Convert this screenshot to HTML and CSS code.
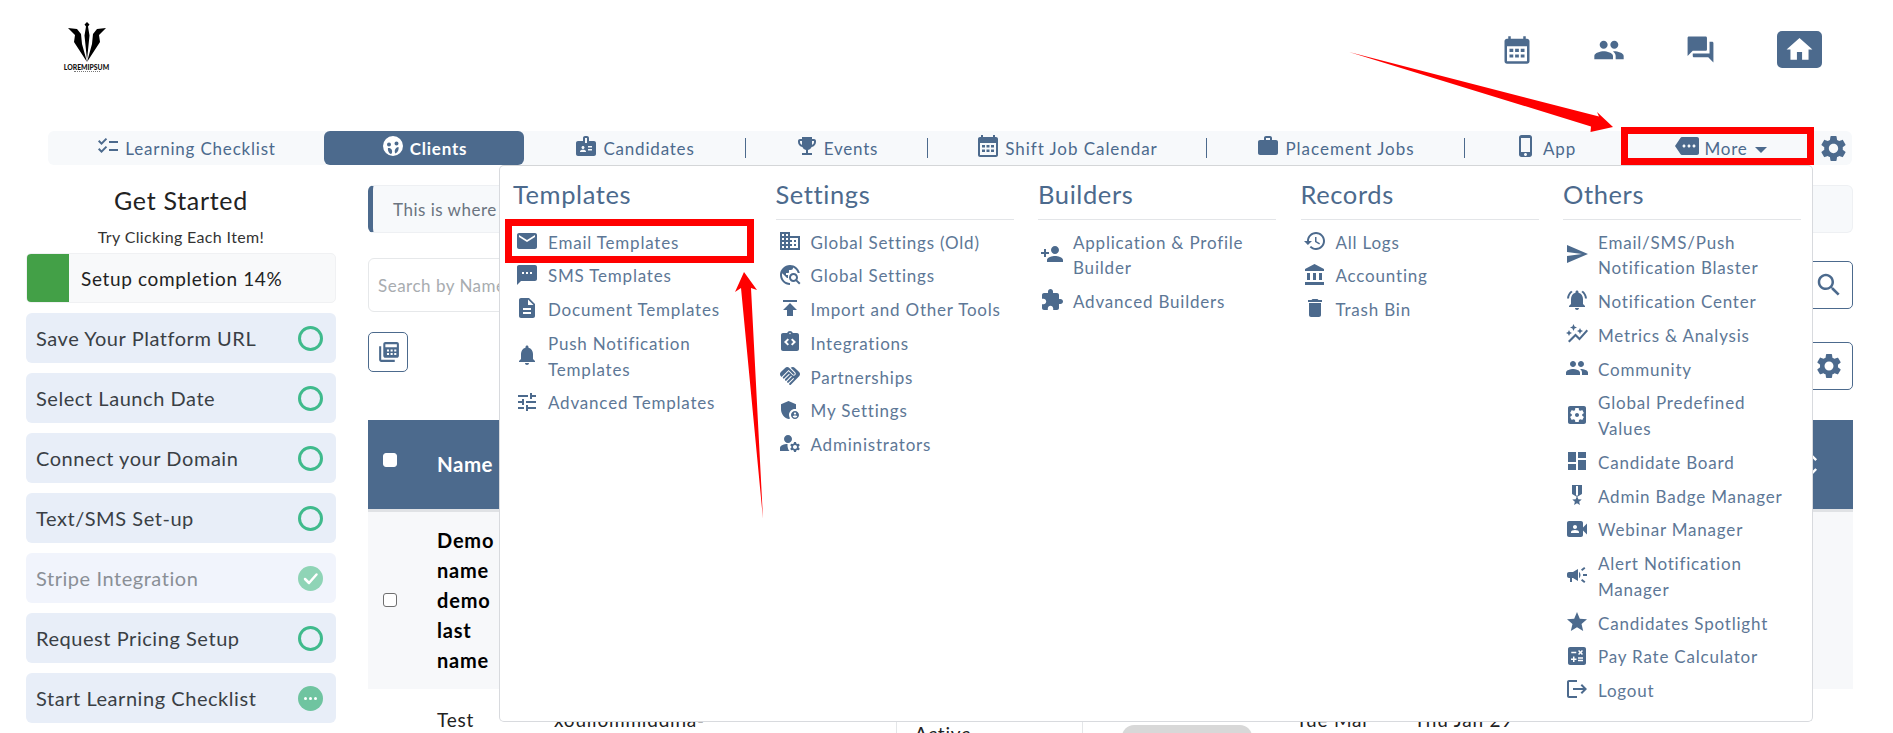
FILE: index.html
```html
<!DOCTYPE html>
<html lang="en">
<head>
<meta charset="utf-8">
<title>Clients</title>
<link rel="stylesheet" href="styles.css">
</head>
<body>
<svg class="defs" width="0" height="0" aria-hidden="true">
<symbol id="i-email" viewBox="0 0 24 24"><path d="M20 4H4c-1.1 0-1.99.9-1.99 2L2 18c0 1.1.9 2 2 2h16c1.1 0 2-.9 2-2V6c0-1.1-.9-2-2-2zm0 4l-8 5-8-5V6l8 5 8-5v2z"/></symbol>
<symbol id="i-sms" viewBox="0 0 24 24"><path d="M20 2H4c-1.1 0-1.99.9-1.99 2L2 22l4-4h14c1.1 0 2-.9 2-2V4c0-1.1-.9-2-2-2zM9 11H7V9h2v2zm4 0h-2V9h2v2zm4 0h-2V9h2v2z"/></symbol>
<symbol id="i-doc" viewBox="0 0 24 24"><path d="M14 2H6c-1.1 0-1.99.9-1.99 2L4 20c0 1.1.89 2 1.99 2H18c1.1 0 2-.9 2-2V8l-6-6zm2 16H8v-2h8v2zm0-4H8v-2h8v2zm-3-5V3.5L18.5 9H13z"/></symbol>
<symbol id="i-bell" viewBox="0 0 24 24"><path d="M12 22c1.1 0 2-.9 2-2h-4c0 1.1.89 2 2 2zm6-6v-5c0-3.07-1.64-5.64-4.5-6.32V4c0-.83-.67-1.5-1.5-1.5s-1.5.67-1.5 1.5v.68C7.63 5.36 6 7.92 6 11v5l-2 2v1h16v-1l-2-2z"/></symbol>
<symbol id="i-tune" viewBox="0 0 24 24"><path d="M3 17v2h6v-2H3zM3 5v2h10V5H3zm10 16v-2h8v-2h-8v-2h-2v6h2zM7 9v2H3v2h4v2h2V9H7zm14 4v-2H11v2h10zm-6-4h2V7h4V5h-4V3h-2v6z"/></symbol>
<symbol id="i-domain" viewBox="0 0 24 24"><path d="M12 7V3H2v18h20V7H12zM6 19H4v-2h2v2zm0-4H4v-2h2v2zm0-4H4V9h2v2zm0-4H4V5h2v2zm4 12H8v-2h2v2zm0-4H8v-2h2v2zm0-4H8V9h2v2zm0-4H8V5h2v2zm10 12h-8v-2h2v-2h-2v-2h2v-2h-2V9h8v10zm-2-8h-2v2h2v-2zm0 4h-2v2h2v-2z"/></symbol>
<symbol id="i-travel" viewBox="0 0 24 24"><path d="M19.3 16.9c.4-.7.7-1.5.7-2.4 0-2.5-2-4.5-4.5-4.5S11 12 11 14.5s2 4.5 4.5 4.5c.9 0 1.7-.3 2.4-.7l3.2 3.2 1.4-1.4-3.2-3.2zm-3.8.1c-1.4 0-2.5-1.1-2.5-2.5s1.1-2.5 2.5-2.5 2.5 1.1 2.5 2.5-1.1 2.5-2.5 2.5zM12 20v2C6.48 22 2 17.52 2 12S6.48 2 12 2c4.84 0 8.87 3.44 9.8 8h-2.07c-.64-2.46-2.4-4.47-4.73-5.41V5c0 1.1-.9 2-2 2h-2v2c0 .55-.45 1-1 1H8v2h2v3H9l-4.79-4.79C4.08 10.79 4 11.38 4 12c0 4.41 3.59 8 8 8z"/></symbol>
<symbol id="i-publish" viewBox="0 0 24 24"><path d="M5 4v2h14V4H5zm0 10h4v6h6v-6h4l-7-7-7 7z"/></symbol>
<symbol id="i-integ" viewBox="0 0 24 24"><path d="M19 3h-4.18C14.4 1.84 13.3 1 12 1s-2.4.84-2.82 2H5c-1.1 0-2 .9-2 2v14c0 1.1.9 2 2 2h14c1.1 0 2-.9 2-2V5c0-1.1-.9-2-2-2zM11 14.17l-1.41 1.42L6 12l3.59-3.59L11 9.83 8.83 12 11 14.17zm1-9.92c-.41 0-.75-.34-.75-.75s.34-.75.75-.75.75.34.75.75-.34.75-.75.75zm2.41 11.34L13 14.17 15.17 12 13 9.83l1.41-1.42L18 12l-3.59 3.59z"/></symbol>
<symbol id="i-hand" viewBox="0 0 24 24"><path d="M16.48 10.41c-.39.39-1.04.39-1.43 0l-4.47-4.46-7.05 7.04-.66-.63c-1.17-1.17-1.17-3.07 0-4.24l4.24-4.24c1.17-1.17 3.07-1.17 4.24 0L16.48 9c.39.39.39 1.02 0 1.41zm.7-2.12c.78.78.78 2.05 0 2.83-1.27 1.27-2.61.22-2.83 0l-3.76-3.76-5.57 5.57c-.39.39-.39 1.02 0 1.41.39.39 1.02.39 1.42 0l4.62-4.62.71.71-4.62 4.62c-.39.39-.39 1.02 0 1.41.39.39 1.02.39 1.42 0l4.62-4.62.71.71-4.62 4.62c-.39.39-.39 1.02 0 1.41.39.39 1.02.39 1.41 0l4.62-4.62.71.71-4.62 4.62c-.39.39-.39 1.02 0 1.41.39.39 1.02.39 1.41 0l8.32-8.34c1.17-1.17 1.17-3.07 0-4.24l-4.24-4.24c-1.15-1.15-3.01-1.17-4.18-.06l4.47 4.47z"/></symbol>
<symbol id="i-shield" viewBox="0 0 24 24"><path d="M17 11c.34 0 .67.04 1 .09V6.27L10.5 3 3 6.27v4.91c0 4.54 3.2 8.79 7.5 9.82.55-.13 1.08-.32 1.6-.55-.69-.98-1.1-2.17-1.1-3.45 0-3.31 2.69-6 6-6z"/><path d="M17 13c-2.21 0-4 1.79-4 4s1.79 4 4 4 4-1.79 4-4-1.79-4-4-4zm0 1.38c.62 0 1.12.51 1.12 1.12s-.51 1.12-1.12 1.12-1.12-.51-1.12-1.12.5-1.12 1.12-1.12zm0 5.37c-.93 0-1.74-.46-2.24-1.17.05-.72 1.51-1.08 2.24-1.08s2.19.36 2.24 1.08c-.5.71-1.31 1.17-2.24 1.17z"/></symbol>
<symbol id="i-manage" viewBox="0 0 24 24"><path d="M10 12c2.21 0 4-1.79 4-4s-1.79-4-4-4-4 1.79-4 4 1.79 4 4 4zm-.45 1.01C6.85 12.9 2 14.2 2 17v3h9.5c-2.47-2.76-1.97-6.99-1.95-6.99zM20.75 16c0-.22-.03-.42-.06-.63l1.14-1.01-1-1.73-1.45.49c-.32-.27-.68-.48-1.08-.63L18 11h-2l-.3 1.49c-.4.15-.76.36-1.08.63l-1.45-.49-1 1.73 1.14 1.01c-.03.21-.06.41-.06.63s.03.42.06.63l-1.14 1.01 1 1.73 1.45-.49c.32.27.68.48 1.08.63L16 21h2l.3-1.49c.4-.15.76-.36 1.08-.63l1.45.49 1-1.73-1.14-1.01c.03-.21.06-.41.06-.63zM17 18c-1.1 0-2-.9-2-2s.9-2 2-2 2 .9 2 2-.9 2-2 2z"/></symbol>
<symbol id="i-personadd" viewBox="0 0 24 24"><path d="M15 12c2.21 0 4-1.79 4-4s-1.79-4-4-4-4 1.79-4 4 1.79 4 4 4zm-9-2V7H4v3H1v2h3v3h2v-3h3v-2H6zm9 4c-2.67 0-8 1.34-8 4v2h16v-2c0-2.66-5.33-4-8-4z"/></symbol>
<symbol id="i-ext" viewBox="0 0 24 24"><path d="M20.5 11H19V7c0-1.1-.9-2-2-2h-4V3.5C13 2.12 11.88 1 10.5 1S8 2.12 8 3.5V5H4c-1.1 0-1.99.9-1.99 2v3.8H3.5c1.49 0 2.7 1.21 2.7 2.7s-1.21 2.7-2.7 2.7H2V20c0 1.1.9 2 2 2h3.8v-1.5c0-1.49 1.21-2.7 2.7-2.7 1.49 0 2.7 1.21 2.7 2.7V22H17c1.1 0 2-.9 2-2v-4h1.5c1.38 0 2.5-1.12 2.5-2.5S21.88 11 20.5 11z"/></symbol>
<symbol id="i-history" viewBox="0 0 24 24"><path d="M13 3c-4.97 0-9 4.03-9 9H1l3.89 3.89.07.14L9 12H6c0-3.87 3.13-7 7-7s7 3.13 7 7-3.13 7-7 7c-1.93 0-3.68-.79-4.94-2.06l-1.42 1.42C8.27 19.99 10.51 21 13 21c4.97 0 9-4.03 9-9s-4.03-9-9-9zm-1 5v5l4.28 2.54.72-1.21-3.5-2.08V8H12z"/></symbol>
<symbol id="i-bank" viewBox="0 0 24 24"><path d="M4 10v7h3v-7H4zm6 0v7h3v-7h-3zM2 22h19v-3H2v3zm14-12v7h3v-7h-3zm-4.5-9L2 6v2h19V6l-9.5-5z"/></symbol>
<symbol id="i-trash" viewBox="0 0 24 24"><path d="M6 19c0 1.1.9 2 2 2h8c1.1 0 2-.9 2-2V7H6v12zM19 4h-3.5l-1-1h-5l-1 1H5v2h14V4z"/></symbol>
<symbol id="i-send" viewBox="0 0 24 24"><path d="M2.01 21L23 12 2.01 3 2 10l15 2-15 2z"/></symbol>
<symbol id="i-bellactive" viewBox="0 0 24 24"><path d="M7.58 4.08L6.15 2.65C3.75 4.48 2.17 7.3 2.03 10.5h2c.15-2.65 1.51-4.97 3.55-6.42zm12.39 6.42h2c-.15-3.2-1.73-6.02-4.12-7.85l-1.42 1.43c2.02 1.45 3.39 3.77 3.54 6.42zM18 11c0-3.07-1.64-5.64-4.5-6.32V4c0-.83-.67-1.5-1.5-1.5s-1.5.67-1.5 1.5v.68C7.63 5.36 6 7.92 6 11v5l-2 2v1h16v-1l-2-2v-5zm-6 11c.14 0 .27-.01.4-.04.65-.14 1.18-.58 1.44-1.18.1-.24.15-.5.15-.78h-4c.01 1.1.9 2 2.01 2z"/></symbol>
<symbol id="i-graph" viewBox="0 0 24 24"><path d="M14.06 9.94L12 9l2.06-.94L15 6l.94 2.06L18 9l-2.06.94L15 12l-.94-2.06zM4 14l.94-2.06L7 11l-2.06-.94L4 8l-.94 2.06L1 11l2.06.94L4 14zm4.5-5l1.09-2.41L12 5.5 9.59 4.41 8.5 2 7.41 4.41 5 5.5l2.41 1.09L8.5 9zm-4 11.5l6-6.01 4 4L23 8.93l-1.41-1.41-7.09 7.97-4-4L3 19l1.5 1.5z"/></symbol>
<symbol id="i-people" viewBox="0 0 24 24"><path d="M16 11c1.66 0 2.99-1.34 2.99-3S17.66 5 16 5c-1.66 0-3 1.34-3 3s1.34 3 3 3zm-8 0c1.66 0 2.99-1.34 2.99-3S9.66 5 8 5C6.34 5 5 6.34 5 8s1.34 3 3 3zm0 2c-2.33 0-7 1.17-7 3.5V19h14v-2.5c0-2.33-4.67-3.5-7-3.5zm8 0c-.29 0-.62.02-.97.05 1.16.84 1.97 1.97 1.97 3.45V19h6v-2.5c0-2.33-4.67-3.5-7-3.5z"/></symbol>
<symbol id="i-setapp" viewBox="0 0 24 24"><path d="M12 10c-1.1 0-2 .9-2 2s.9 2 2 2 2-.9 2-2-.9-2-2-2zm7-7H5c-1.11 0-2 .9-2 2v14c0 1.1.89 2 2 2h14c1.11 0 2-.9 2-2V5c0-1.1-.89-2-2-2zm-1.75 9c0 .23-.02.46-.05.68l1.48 1.16c.13.11.17.3.08.45l-1.4 2.42c-.09.15-.27.21-.43.15l-1.74-.7c-.36.28-.76.51-1.18.69l-.26 1.85c-.03.17-.18.3-.35.3h-2.8c-.17 0-.32-.13-.35-.29l-.26-1.85c-.43-.18-.82-.41-1.18-.69l-1.74.7c-.16.06-.34 0-.43-.15l-1.4-2.42c-.09-.15-.05-.34.08-.45l1.48-1.16c-.03-.23-.05-.46-.05-.69 0-.23.02-.46.05-.68l-1.48-1.16c-.13-.11-.17-.3-.08-.45l1.4-2.42c.09-.15.27-.21.43-.15l1.74.7c.36-.28.76-.51 1.18-.69l.26-1.85c.03-.17.18-.3.35-.3h2.8c.17 0 .32.13.35.29l.26 1.85c.43.18.82.41 1.18.69l1.74-.7c.16-.06.34 0 .43.15l1.4 2.42c.09.15.05.34-.08.45l-1.48 1.16c.03.23.05.46.05.69z"/></symbol>
<symbol id="i-dash" viewBox="0 0 24 24"><path d="M3 13h8V3H3v10zm0 8h8v-6H3v6zm10 0h8V11h-8v10zm0-18v6h8V3h-8z"/></symbol>
<symbol id="i-medal" viewBox="0 0 24 24"><path d="M17 10.43V2H7v8.43c0 .35.18.68.49.86l4.18 2.51-.99 2.34-3.41.29 2.59 2.24L9.07 22 12 20.23 14.93 22l-.78-3.33 2.59-2.24-3.41-.29-.99-2.34 4.18-2.51c.3-.18.48-.5.48-.86zm-4 1.8l-1 .6-1-.6V3h2v9.23z"/></symbol>
<symbol id="i-video" viewBox="0 0 24 24"><path d="M18 10.48V6c0-1.1-.9-2-2-2H4c-1.1 0-2 .9-2 2v12c0 1.1.9 2 2 2h12c1.1 0 2-.9 2-2v-4.48l4 3.98v-11l-4 3.98zM10 8c1.1 0 2 .9 2 2s-.9 2-2 2-2-.9-2-2 .9-2 2-2zm4 8H6v-.57c0-.81.48-1.53 1.22-1.85.85-.37 1.79-.58 2.78-.58.99 0 1.93.21 2.78.58.74.32 1.22 1.04 1.22 1.85V16z"/></symbol>
<symbol id="i-campaign" viewBox="0 0 24 24"><path d="M18 11v2h4v-2h-4zm-2 6.61c.96.71 2.21 1.65 3.2 2.39.4-.53.8-1.07 1.2-1.6-.99-.74-2.24-1.68-3.2-2.4-.4.54-.8 1.08-1.2 1.61zM20.4 5.6c-.4-.53-.8-1.07-1.2-1.6-.99.74-2.24 1.68-3.2 2.4.4.53.8 1.07 1.2 1.6.96-.72 2.21-1.65 3.2-2.4zM4 9c-1.1 0-2 .9-2 2v2c0 1.1.9 2 2 2h1v4h2v-4h1l5 3V6L8 9H4zm11.5 3c0-1.33-.58-2.53-1.5-3.35v6.69c.92-.81 1.5-2.01 1.5-3.34z"/></symbol>
<symbol id="i-star" viewBox="0 0 24 24"><path d="M12 17.27L18.18 21l-1.64-7.03L22 9.24l-7.19-.61L12 2 9.19 8.63 2 9.24l5.46 4.73L5.82 21z"/></symbol>
<symbol id="i-calc" viewBox="0 0 24 24"><path d="M19 3H5c-1.1 0-2 .9-2 2v14c0 1.1.9 2 2 2h14c1.1 0 2-.9 2-2V5c0-1.1-.9-2-2-2zm-5.97 4.06L14.09 6l1.41 1.41L16.91 6l1.06 1.06-1.41 1.41 1.41 1.41-1.06 1.06-1.41-1.4-1.41 1.41-1.06-1.06 1.41-1.41-1.41-1.42zm-6.78.66h5v1.5h-5v-1.5zM11.5 16h-2v2H8v-2H6v-1.5h2v-2h1.5v2h2V16zm6.5 1.25h-5v-1.5h5v1.5zm0-2.5h-5v-1.5h5v1.5z"/></symbol>
<symbol id="i-logout" viewBox="0 0 24 24"><path d="M17 7l-1.41 1.41L18.17 11H8v2h10.17l-2.58 2.58L17 17l5-5zM4 5h8V3H4c-1.1 0-2 .9-2 2v14c0 1.1.9 2 2 2h8v-2H4V5z"/></symbol>
<symbol id="i-gear" viewBox="0 0 24 24"><path d="M19.14 12.94c.04-.3.06-.61.06-.94 0-.32-.02-.64-.07-.94l2.03-1.58c.18-.14.23-.41.12-.61l-1.92-3.32c-.12-.22-.37-.29-.59-.22l-2.39.96c-.5-.38-1.03-.7-1.62-.94l-.36-2.54c-.04-.24-.24-.41-.48-.41h-3.84c-.24 0-.43.17-.47.41l-.36 2.54c-.59.24-1.13.57-1.62.94l-2.39-.96c-.22-.08-.47 0-.59.22L2.74 8.87c-.12.21-.08.47.12.61l2.03 1.58c-.05.3-.09.63-.09.94s.02.64.07.94l-2.03 1.58c-.18.14-.23.41-.12.61l1.92 3.32c.12.22.37.29.59.22l2.39-.96c.5.38 1.03.7 1.62.94l.36 2.54c.05.24.24.41.48.41h3.84c.24 0 .44-.17.47-.41l.36-2.54c.59-.24 1.13-.56 1.62-.94l2.39.96c.22.08.47 0 .59-.22l1.92-3.32c.12-.22.07-.47-.12-.61l-2.01-1.58zM12 15.6c-1.98 0-3.6-1.62-3.6-3.6s1.62-3.6 3.6-3.6 3.6 1.62 3.6 3.6-1.62 3.6-3.6 3.6z"/></symbol>
<symbol id="i-search" viewBox="0 0 24 24"><path d="M15.5 14h-.79l-.28-.27C15.41 12.59 16 11.11 16 9.5 16 5.91 13.09 3 9.5 3S3 5.91 3 9.5 5.91 16 9.5 16c1.61 0 3.09-.59 4.23-1.57l.27.28v.79l5 4.99L20.49 19l-4.99-5zm-6 0C7.01 14 5 11.99 5 9.5S7.01 5 9.5 5 14 7.01 14 9.5 11.99 14 9.5 14z"/></symbol>
<symbol id="i-home" viewBox="0 0 24 24"><path d="M10 20v-6h4v6h5v-8h3L12 3 2 12h3v8z"/></symbol>
<symbol id="i-calendar" viewBox="0 0 24 24"><path fill-rule="evenodd" d="M20 3h-1V1h-2v2H7V1H5v2H4c-1.1 0-2 .9-2 2v16c0 1.1.9 2 2 2h16c1.1 0 2-.9 2-2V5c0-1.1-.9-2-2-2zm0 18H4V9h16v12z"/><path d="M6 11h3v2.500H6zM10.500 11h3v2.500h-3zM15 11h3v2.500h-3zM6 15.500h3V18H6zM10.500 15.500h3V18h-3zM15 15.500h3V18h-3z"/></symbol>
<symbol id="i-forum" viewBox="0 0 24 24"><path d="M21 6h-2v9H6v2c0 .55.45 1 1 1h11l4 4V7c0-.55-.45-1-1-1zm-4 6V3c0-.55-.45-1-1-1H3c-.55 0-1 .45-1 1v14l4-4h10c.55 0 1-.45 1-1z"/></symbol>
<symbol id="i-check" viewBox="0 0 24 24"><path d="M22 7h-9v2h9V7zm0 8h-9v2h9v-2zM5.540 11L2 7.460l1.410-1.410 2.120 2.120 4.240-4.240 1.410 1.410L5.540 11zm0 8L2 15.460l1.410-1.410 2.120 2.120 4.240-4.240 1.410 1.410L5.540 19z"/></symbol>
<symbol id="i-face" viewBox="0 0 24 24"><path fill-rule="evenodd" d="M12 2a10 10 0 1 0 0 20 10 10 0 0 0 0-20zM8 8.500a2 2 0 1 1 0 4 2 2 0 0 1 0-4zm7.500-1a2 2 0 1 1 0 4 2 2 0 0 1 0-4zM7 14c2 0 3.500.5 4 2.500.3 1.500 0 3-1 3.500-2-.6-3.500-3.500-3-6zm10.500-1c.5 2.500-.5 5-3 6.500-.8-1-1-2.500-.5-3.800.5-1.500 2-2.500 3.500-2.700z"/></symbol>
<symbol id="i-badge" viewBox="0 0 24 24"><path d="M20 7h-5V4c0-1.100-.9-2-2-2h-2c-1.100 0-2 .9-2 2v3H4c-1.100 0-2 .9-2 2v11c0 1.100.9 2 2 2h16c1.100 0 2-.9 2-2V9c0-1.100-.9-2-2-2zM9 12c.830 0 1.500.670 1.500 1.500S9.830 15 9 15s-1.500-.670-1.500-1.500S8.170 12 9 12zm3 6H6v-.430c0-.600.360-1.150.920-1.390.640-.280 1.340-.430 2.080-.430s1.440.150 2.080.430c.550.240.920.780.920 1.390V18zm1-9h-2V4h2v5zm5 7.500h-4V15h4v1.500zm0-3h-4V12h4v1.500z"/></symbol>
<symbol id="i-trophy" viewBox="0 0 24 24"><path d="M19 5h-2V3H7v2H5c-1.100 0-2 .9-2 2v1c0 2.550 1.920 4.630 4.390 4.940.63 1.500 1.980 2.630 3.610 2.960V19H7v2h10v-2h-4v-3.100c1.630-.33 2.980-1.460 3.610-2.960C19.080 12.630 21 10.550 21 8V7c0-1.100-.9-2-2-2zM5 8V7h2v3.820C5.840 10.400 5 9.300 5 8zm14 0c0 1.300-.84 2.400-2 2.820V7h2v1z"/></symbol>
<symbol id="i-work" viewBox="0 0 24 24"><path d="M20 6h-4V4c0-1.110-.89-2-2-2h-4c-1.110 0-2 .89-2 2v2H4c-1.110 0-1.990.89-1.990 2L2 19c0 1.110.89 2 2 2h16c1.110 0 2-.89 2-2V8c0-1.110-.89-2-2-2zm-6 0h-4V4h4v2z"/></symbol>
<symbol id="i-phone" viewBox="0 0 24 24"><path d="M15.500 1h-8C6.120 1 5 2.120 5 3.500v17C5 21.880 6.120 23 7.500 23h8c1.380 0 2.500-1.120 2.500-2.500v-17C18 2.120 16.880 1 15.500 1zm-4 21c-.83 0-1.500-.67-1.500-1.500s.67-1.500 1.500-1.500 1.500.67 1.500 1.500-.67 1.500-1.500 1.500zm4.500-4H7V4h9v14z"/></symbol>
<symbol id="i-more" viewBox="0 0 24 24"><path d="M22 3H7c-.69 0-1.230.35-1.590.88L0 12l5.410 8.110c.36.53.9.89 1.590.89h15c1.100 0 2-.9 2-2V5c0-1.100-.9-2-2-2zM9 13.500c-.83 0-1.500-.67-1.500-1.500s.67-1.500 1.500-1.500 1.500.67 1.500 1.500-.67 1.500-1.500 1.500zm5 0c-.83 0-1.500-.67-1.500-1.500s.67-1.500 1.500-1.500 1.500.67 1.500 1.500-.67 1.500-1.500 1.500zm5 0c-.83 0-1.500-.67-1.500-1.500s.67-1.500 1.500-1.500 1.500.67 1.500 1.500-.67 1.500-1.500 1.500z"/></symbol>
<symbol id="i-sort" viewBox="0 0 24 24"><path d="M12 5.830L15.170 9l1.410-1.410L12 3 7.410 7.590 8.830 9 12 5.830zm0 12.340L8.830 15l-1.410 1.410L12 21l4.590-4.590L15.170 15 12 18.170z"/></symbol>
<symbol id="i-calcs" viewBox="0 0 24 24"><path d="M3 6v13c0 1.100.9 2 2 2h13v-2H5V6H3z"/><path d="M9 2c-1.100 0-2 .9-2 2v11c0 1.100.9 2 2 2h11c1.100 0 2-.9 2-2V4c0-1.100-.9-2-2-2H9zm0 2h11v3H9V4zm1.500 5h2v2h-2V9zm3.500 0h2v2h-2V9zm3.500 0h2v2h-2V9zm-7 3.500h2v2h-2v-2zm3.500 0h2v2h-2v-2zm3.500 0h2v2h-2v-2z" fill-rule="evenodd"/></symbol>
</svg>

<div class="page">
  <header class="topbar">
    <div class="logo">
      <svg class="logo-mark" viewBox="0 0 40 40" aria-hidden="true">
        <path d="M20 0l2.500 2.500-1.500 2 1.500 9L20 38l-2.500-24.500 1.500-9-1.500-2z"/>
        <path d="M1 6l9 1 4 5 1 10 5 18L7 20l1-7z"/>
        <path d="M39 6l-9 1-4 5-1 10-5 18 13-20-1-7z"/>
      </svg>
      <span class="logo-text">LOREMIPSUM</span>
      <span class="logo-sub"></span>
    </div>
    <div class="quick">
      <svg class="ic quick-cal"><use href="#i-calendar"/></svg>
      <svg class="ic quick-people"><use href="#i-people"/></svg>
      <svg class="ic quick-forum"><use href="#i-forum"/></svg>
      <a class="home-btn"><svg class="ic home-ic"><use href="#i-home"/></svg></a>
    </div>
  </header>

  <nav class="tabs">
    <a class="tab t-learn"><svg class="ic"><use href="#i-check"/></svg>Learning Checklist</a>
    <a class="tab t-clients active"><svg class="ic"><use href="#i-face"/></svg>Clients</a>
    <a class="tab t-cand"><svg class="ic"><use href="#i-badge"/></svg>Candidates</a>
    <span class="sep"></span>
    <a class="tab t-events"><svg class="ic"><use href="#i-trophy"/></svg>Events</a>
    <span class="sep"></span>
    <a class="tab t-shift"><svg class="ic"><use href="#i-calendar"/></svg>Shift Job Calendar</a>
    <span class="sep"></span>
    <a class="tab t-place"><svg class="ic"><use href="#i-work"/></svg>Placement Jobs</a>
    <span class="sep"></span>
    <a class="tab t-app"><svg class="ic ic-phone"><use href="#i-phone"/></svg>App</a>
    <a class="tab t-more"><svg class="ic"><use href="#i-more"/></svg>More<span class="caret"></span></a>
    <a class="tab t-gear"><svg class="ic ic-gear"><use href="#i-gear"/></svg></a>
  </nav>

  <div class="body">
    <aside class="side">
      <h2 class="side-title">Get Started</h2>
      <p class="side-sub">Try Clicking Each Item!</p>
      <div class="progress"><span class="progress-fill"></span><span class="progress-text">Setup completion 14%</span></div>
      <ul class="steps">
        <li class="step">Save Your Platform URL<span class="dot"></span></li>
        <li class="step">Select Launch Date<span class="dot"></span></li>
        <li class="step">Connect your Domain<span class="dot"></span></li>
        <li class="step">Text/SMS Set-up<span class="dot"></span></li>
        <li class="step done">Stripe Integration<svg class="dot-svg" viewBox="0 0 25 25"><circle cx="12.500" cy="12.500" r="12.500"/><path class="mark" d="M7 13l4 4 7.500-8.500"/></svg></li>
        <li class="step">Request Pricing Setup<span class="dot"></span></li>
        <li class="step">Start Learning Checklist<svg class="dot-svg progress-dot" viewBox="0 0 25 25"><circle cx="12.500" cy="12.500" r="12.500"/><circle class="pip" cx="7.500" cy="12.500" r="1.500"/><circle class="pip" cx="12.500" cy="12.500" r="1.500"/><circle class="pip" cx="17.500" cy="12.500" r="1.500"/></svg></li>
      </ul>
    </aside>

    <main class="main">
      <div class="notice">This is where you can manage all of your clients</div>
      <div class="search-row">
        <div class="search-input">Search by Name</div>
        <button class="square-btn"><svg class="ic ic-btn"><use href="#i-search"/></svg></button>
      </div>
      <div class="tool-row">
        <button class="calc-btn"><svg class="ic ic-calcs"><use href="#i-calcs"/></svg></button>
        <button class="square-btn gear-btn"><svg class="ic ic-btn"><use href="#i-gear"/></svg></button>
      </div>
      <table class="grid">
        <colgroup><col class="c1"><col class="c2"><col class="c3"><col class="c4"><col class="c5"><col class="c6"><col class="c7"><col class="c8"></colgroup>
        <thead>
          <tr><th><span class="box head-box"></span></th><th>Name</th><th></th><th></th><th></th><th></th><th></th><th class="th-sort"><svg class="ic ic-sort"><use href="#i-sort"/></svg></th></tr>
        </thead>
        <tbody>
          <tr class="r1"><td><span class="box"></span></td><td class="b"><span class="name-wrap">Demo name demo last name</span></td><td></td><td></td><td></td><td></td><td></td><td></td></tr>
          <tr class="r2"><td></td><td>Test</td><td>xouliommiddina-</td><td class="bl status">Active</td><td class="bl"><span class="pill"></span></td><td>Tue Mar</td><td>Thu Jan 29</td><td class="low">No</td></tr>
        </tbody>
      </table>
    </main>
  </div>

  <section class="mega">
    <div class="mega-col">
      <h3>Templates</h3>
      <a class="mi"><svg class="ic"><use href="#i-email"/></svg><span>Email Templates</span></a>
      <a class="mi"><svg class="ic"><use href="#i-sms"/></svg><span>SMS Templates</span></a>
      <a class="mi"><svg class="ic"><use href="#i-doc"/></svg><span>Document Templates</span></a>
      <a class="mi"><svg class="ic"><use href="#i-bell"/></svg><span>Push Notification Templates</span></a>
      <a class="mi"><svg class="ic"><use href="#i-tune"/></svg><span>Advanced Templates</span></a>
    </div>
    <div class="mega-col">
      <h3>Settings</h3>
      <a class="mi"><svg class="ic"><use href="#i-domain"/></svg><span>Global Settings (Old)</span></a>
      <a class="mi"><svg class="ic"><use href="#i-travel"/></svg><span>Global Settings</span></a>
      <a class="mi"><svg class="ic"><use href="#i-publish"/></svg><span>Import and Other Tools</span></a>
      <a class="mi"><svg class="ic"><use href="#i-integ"/></svg><span>Integrations</span></a>
      <a class="mi"><svg class="ic"><use href="#i-hand"/></svg><span>Partnerships</span></a>
      <a class="mi"><svg class="ic"><use href="#i-shield"/></svg><span>My Settings</span></a>
      <a class="mi"><svg class="ic"><use href="#i-manage"/></svg><span>Administrators</span></a>
    </div>
    <div class="mega-col">
      <h3>Builders</h3>
      <a class="mi"><svg class="ic"><use href="#i-personadd"/></svg><span>Application &amp; Profile Builder</span></a>
      <a class="mi"><svg class="ic"><use href="#i-ext"/></svg><span>Advanced Builders</span></a>
    </div>
    <div class="mega-col">
      <h3>Records</h3>
      <a class="mi"><svg class="ic"><use href="#i-history"/></svg><span>All Logs</span></a>
      <a class="mi"><svg class="ic"><use href="#i-bank"/></svg><span>Accounting</span></a>
      <a class="mi"><svg class="ic"><use href="#i-trash"/></svg><span>Trash Bin</span></a>
    </div>
    <div class="mega-col">
      <h3>Others</h3>
      <a class="mi"><svg class="ic"><use href="#i-send"/></svg><span>Email/SMS/Push Notification Blaster</span></a>
      <a class="mi"><svg class="ic"><use href="#i-bellactive"/></svg><span>Notification Center</span></a>
      <a class="mi"><svg class="ic"><use href="#i-graph"/></svg><span>Metrics &amp; Analysis</span></a>
      <a class="mi"><svg class="ic"><use href="#i-people"/></svg><span>Community</span></a>
      <a class="mi"><svg class="ic"><use href="#i-setapp"/></svg><span>Global Predefined Values</span></a>
      <a class="mi"><svg class="ic"><use href="#i-dash"/></svg><span>Candidate Board</span></a>
      <a class="mi"><svg class="ic"><use href="#i-medal"/></svg><span>Admin Badge Manager</span></a>
      <a class="mi"><svg class="ic"><use href="#i-video"/></svg><span>Webinar Manager</span></a>
      <a class="mi"><svg class="ic"><use href="#i-campaign"/></svg><span>Alert Notification Manager</span></a>
      <a class="mi"><svg class="ic"><use href="#i-star"/></svg><span>Candidates Spotlight</span></a>
      <a class="mi"><svg class="ic"><use href="#i-calc"/></svg><span>Pay Rate Calculator</span></a>
      <a class="mi"><svg class="ic"><use href="#i-logout"/></svg><span>Logout</span></a>
    </div>
  </section>

  <div class="mark-box mark-more"></div>
  <div class="mark-box mark-email"></div>
  <svg class="arrows" viewBox="0 0 1893 733" aria-hidden="true">
    <polygon points="1349,52 1599,116.500 1597,112 1613,127 1590.500,132 1591,126.500"/>
    <polygon points="744,272 757,290 751,288 763,519 741,288 735,292"/>
  </svg>
</div>
</body>
</html>
```

FILE: styles.css
```css
:root {
  --blue: #4c6a8d;
  --font: "Lato", "Noto Sans", sans-serif;
}
* { box-sizing: border-box; }
html, body { margin: 0; padding: 0; }
body {
  width: 1893px;
  height: 733px;
  overflow: hidden;
  background: #fff;
  font-family: var(--font);
  color: #222;
}
.defs { position: absolute; }
.page { position: relative; width: 1893px; height: 733px; overflow: hidden; }
.ic { width: 24px; height: 24px; fill: var(--blue); flex: none; display: block; }

/* header */
.topbar { height: 131px; display: flex; justify-content: space-between; align-items: flex-start; padding: 22px 71px 0 65px; }
.logo { display: flex; flex-direction: column; align-items: center; width: 43px; }
.logo-mark { width: 40px; height: 40px; fill: #000; }
.logo-text { font-size: 6.800px; font-weight: 900; line-height: 8px; color: #111; white-space: nowrap; margin-top: 1px; }
.logo-sub { width: 26px; height: 1px; border-top: 1px dotted #777; }
.quick { display: flex; align-items: center; height: 37px; margin-top: 9px; }
.quick-cal { width: 30px; height: 30px; margin-right: 61px; }
.quick-people { width: 32px; height: 32px; margin-right: 60px; }
.quick-forum { width: 31px; height: 31px; margin-right: 61px; }
.home-btn { width: 45px; height: 37px; border-radius: 5px; background: var(--blue); display: flex; align-items: center; justify-content: center; }
.home-ic { width: 31px; height: 31px; fill: #fff; }

/* tabs */
.tabs { margin-left: 48px; width: 1804px; height: 34px; display: flex; align-items: center; background: #f7f9fb; border-radius: 6px; }
.tab { height: 34px; display: flex; align-items: center; justify-content: center; gap: 5px; font-size: 17px; letter-spacing: .8px; color: var(--blue); white-space: nowrap; }
.tab .ic { margin-top: -5px; }
.sep { flex: none; width: 1px; height: 20px; background: var(--blue); }
.t-learn { flex: 0 0 276px; }
.t-clients { flex: 0 0 200px; letter-spacing: .75px; }
.t-cand { flex: 0 0 221px; }
.t-events { flex: 0 0 181px; }
.t-shift { flex: 0 0 278px; letter-spacing: .95px; }
.t-place { flex: 0 0 257px; letter-spacing: 1px; }
.t-app { flex: 0 0 155px; padding-left: 5px; }
.t-more { flex: 0 0 193px; padding-left: 9px; }
.t-gear { flex: 0 0 39px; padding-left: 2px; }
.active { background: var(--blue); color: #fff; font-weight: 700; border-radius: 6px; }
.active .ic { fill: #fff; }
.ic-phone { height: 26px; width: 24px; }
.tab .ic-gear { width: 31px; height: 31px; margin-top: 0; }
.caret { width: 0; height: 0; border-left: 6px solid transparent; border-right: 6px solid transparent; border-top: 6px solid var(--blue); margin-left: 2px; margin-top: 4px; }

/* body */
.body { display: flex; padding: 0 40px 0 26px; }
.side { flex: 0 0 310px; margin-right: 32px; }
.side-title { margin: 20px 0 0; font-size: 25px; line-height: 30px; font-weight: 400; text-align: center; letter-spacing: .7px; color: #222; }
.side-sub { margin: 12px 0 0; font-size: 16px; line-height: 20px; text-align: center; color: #333; letter-spacing: .35px; }
.progress { margin-top: 6px; height: 50px; display: flex; align-items: center; background: #f8f9fa; border-radius: 5px; border: 1px solid #f0f1f3; overflow: hidden; }
.progress-fill { flex: 0 0 43px; height: 50px; background: #43a047; border-radius: 5px 0 0 5px; margin-left: -1px; }
.progress-text { margin-left: 12px; font-size: 19px; letter-spacing: .65px; color: #222; }
.steps { list-style: none; margin: 10px 0 0; padding: 0; display: flex; flex-direction: column; gap: 10px; }
.step { height: 50px; padding: 0 13px 0 10px; display: flex; align-items: center; justify-content: space-between; background: #e8eef8; border-radius: 6px; font-size: 20px; letter-spacing: .55px; color: #3a3f45; }
.step.done { background: #f1f4fc; color: #8a8f96; }
.dot { width: 25px; height: 25px; border-radius: 50%; border: 3px solid #3fba8c; flex: none; }
.dot-svg { width: 25px; height: 25px; fill: #8fd4b6; flex: none; }
.mark { fill: none; stroke: #fff; stroke-width: 2.500; stroke-linecap: round; stroke-linejoin: round; }
.progress-dot { fill: #6fc4a0; }
.pip { fill: #fff; }

/* main */
.main { flex: 1; min-width: 0; }
.notice { margin-top: 20px; height: 48px; padding-left: 20px; display: flex; align-items: center; background: #f7f9fb; border: 1px solid #eef0f3; border-left: 5px solid var(--blue); border-radius: 6px; font-size: 17px; letter-spacing: .5px; color: #6b7480; }
.search-row { margin-top: 25px; display: flex; align-items: center; gap: 12px; }
.search-input { flex: 1; height: 54px; padding-left: 9px; display: flex; align-items: center; border: 1px solid #e6e8ea; border-radius: 6px; font-size: 17px; letter-spacing: .5px; color: #a8acb0; }
.square-btn { width: 48px; height: 48px; padding: 0; display: flex; align-items: center; justify-content: center; background: #fff; border: 1px solid var(--blue); border-radius: 5px; flex: none; }
.ic-btn { width: 30px; height: 30px; }
.tool-row { margin-top: 20px; height: 58px; display: flex; justify-content: space-between; align-items: flex-start; }
.gear-btn { margin-top: 10px; }
.calc-btn { width: 40px; height: 40px; padding: 0; display: flex; align-items: center; justify-content: center; background: #fff; border: 1px solid var(--blue); border-radius: 5px; }
.ic-calcs { width: 25px; height: 25px; }

/* table */
.grid { margin-top: 30px; width: 1485px; table-layout: fixed; border-collapse: collapse; font-size: 19px; letter-spacing: .8px; }
.c1 { width: 51px; } .c2 { width: 117px; } .c3 { width: 360px; } .c4 { width: 186px; }
.c5 { width: 196px; } .c6 { width: 118px; } .c7 { width: 177px; } .c8 { width: 280px; }
.grid th { height: 90px; background: var(--blue); color: #fff; text-align: left; font-size: 20.500px; letter-spacing: .5px; font-weight: 700; padding: 0 0 0 18px; border-bottom: 3px solid #e0e2e5; }
.grid .th-sort { padding-left: 224px; }
.ic-sort { width: 29px; height: 29px; fill: #fff; }
.grid td { padding: 0 0 0 18px; vertical-align: top; color: #222; }
.r1 td { height: 179px; background: #f7f8fa; vertical-align: middle; line-height: 30px; }
.r2 td { padding-top: 18px; line-height: 26px; }
.grid .b { font-weight: 700; color: #000; font-size: 20px; letter-spacing: .8px; }
.name-wrap { display: block; width: 66px; }
.grid .bl { border-left: 1px solid #e4e6e8; }
.grid .status { padding-top: 32px; }
.grid .low { padding-top: 38px; }
.box { display: block; width: 14px; height: 14px; margin-left: -3px; background: #fff; border: 1px solid #6f6f6f; border-radius: 3px; }
.head-box { border-color: #fff; margin-top: -8px; }
.pill { display: block; width: 130px; height: 30px; margin: 18px 0 0 21px; border-radius: 12px; background: #d8d8d8; }

/* mega menu */
.mega { position: absolute; left: 499px; top: 165px; width: 1314px; height: 557px; padding: 0 13px; display: grid; grid-template-columns: repeat(5, 238px); column-gap: 24.500px; align-items: start; background: #fff; border: 1px solid #d8dade; border-top-color: #d4d6d8; border-radius: 5px; }
.mega-col h3 { margin: 0 0 5.500px; height: 54px; padding-top: 13px; font-size: 25.500px; line-height: 30px; font-weight: 400; letter-spacing: .6px; color: var(--blue); border-bottom: 1px solid #e3e5e8; }
.mi { display: flex; align-items: center; padding: 4px 0; font-size: 17px; line-height: 25.750px; letter-spacing: .8px; color: #5d7796; }
.mi .ic { margin: -3px 9px 0 2px; }

/* annotations */
.mark-box { position: absolute; border: 7px solid #ff0000; pointer-events: none; }
.mark-more { left: 1621px; top: 127px; width: 193px; height: 38px; }
.mark-email { left: 505px; top: 219px; width: 249px; height: 44px; }
.arrows { position: absolute; left: 0; top: 0; width: 1893px; height: 733px; fill: #ff0000; pointer-events: none; }
```
